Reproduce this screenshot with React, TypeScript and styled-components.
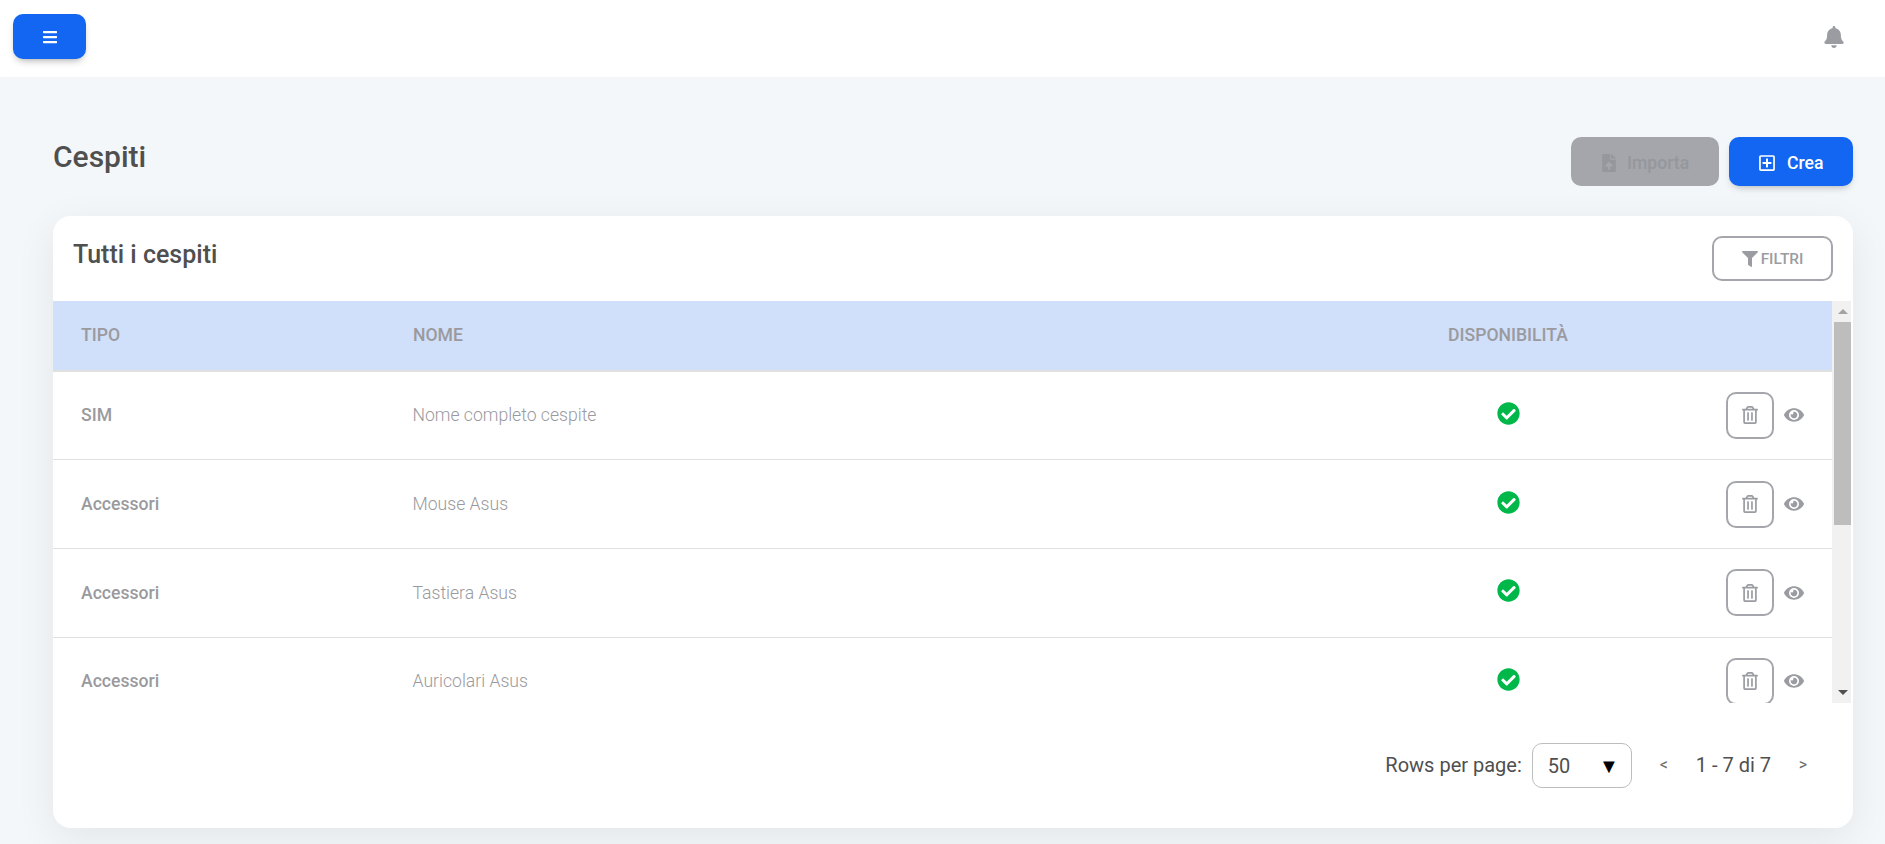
import React from 'react';
import styled, {createGlobalStyle} from "styled-components";
import {FaBars, FaBell, FaCheckCircle, FaEye, FaFileUpload, FaFilter, FaRegPlusSquare, FaRegTrashAlt} from "react-icons/fa";

const assets = [
    {tipo: 'SIM', nome: 'Nome completo cespite'},
    {tipo: 'Accessori', nome: 'Mouse Asus'},
    {tipo: 'Accessori', nome: 'Tastiera Asus'},
    {tipo: 'Accessori', nome: 'Auricolari Asus'},
];

export default function App() {
    return (
        <>
            <GlobalStyle/>
            <TopBar>
                <MenuButton><FaBars size={16}/></MenuButton>
                <BellIcon><FaBell size={22}/></BellIcon>
            </TopBar>
            <Main>
                <PageHead>
                    <PageTitle>Cespiti</PageTitle>
                    <HeadActions>
                        <ImportButton><FaFileUpload size={18}/>Importa</ImportButton>
                        <CreateButton><FaRegPlusSquare size={18}/>Crea</CreateButton>
                    </HeadActions>
                </PageHead>
                <Card>
                    <CardHead>
                        <CardTitle>Tutti i cespiti</CardTitle>
                        <FilterButton><FaFilter size={16}/>FILTRI</FilterButton>
                    </CardHead>
                    <TableArea>
                        <Table>
                            <HeaderRow>
                                <HeaderCell>TIPO</HeaderCell>
                                <HeaderCell>NOME</HeaderCell>
                                <HeaderCell $center>DISPONIBILITÀ</HeaderCell>
                                <HeaderCell/>
                            </HeaderRow>
                            {assets.map((asset, i) => (
                                <Row key={i}>
                                    <TypeCell>{asset.tipo}</TypeCell>
                                    <NameCell>{asset.nome}</NameCell>
                                    <StatusCell><FaCheckCircle size={23}/></StatusCell>
                                    <ActionsCell>
                                        <DeleteButton><FaRegTrashAlt size={18}/></DeleteButton>
                                        <FaEye size={20}/>
                                    </ActionsCell>
                                </Row>
                            ))}
                        </Table>
                        <ScrollTrack>
                            <ScrollArrow $dir="up"/>
                            <ScrollThumb/>
                            <ScrollArrow $dir="down"/>
                        </ScrollTrack>
                    </TableArea>
                    <Pagination>
                        <PagerLabel>Rows per page:</PagerLabel>
                        <PageSize>50<PageSizeArrow>▼</PageSizeArrow></PageSize>
                        <PagerArrow>&lt;</PagerArrow>
                        <PagerRange>1 - 7 di 7</PagerRange>
                        <PagerArrow>&gt;</PagerArrow>
                    </Pagination>
                </Card>
            </Main>
        </>
    );
}

const GlobalStyle = createGlobalStyle`
  html, body {
    margin: 0;
    height: 844px;
    overflow: hidden;
    background: #f4f7fa;
    font-family: Roboto, "Liberation Sans", sans-serif;
  }
  * {
    box-sizing: border-box;
  }
`

const TopBar = styled.header`
  height: 77px;
  background: #fff;
  padding: 14px 32px 0 13px;
  display: flex;
  justify-content: space-between;
  align-items: flex-start;
`
const MenuButton = styled.button`
  width: 73px;
  height: 45px;
  border: none;
  border-radius: 10px;
  background: #1266f1;
  color: #fff;
  display: flex;
  align-items: center;
  justify-content: center;
  box-shadow: 0 4px 9px -4px rgba(0, 0, 0, .45);
`
const BellIcon = styled.span`
  display: flex;
  margin-top: 12px;
  margin-right: 8px;
  color: #9a9ca2;
`
const Main = styled.main`
  padding: 60px 32px 0 53px;
`
const PageHead = styled.div`
  height: 79px;
  display: flex;
  justify-content: space-between;
  align-items: flex-start;
`
const PageTitle = styled.h1`
  margin: 0;
  padding-top: 1px;
  color: #4f4f4f;
  font-size: 30px;
  font-weight: 500;
  line-height: 38px;
`
const HeadActions = styled.div`
  display: flex;
  gap: 10px;
`
const BaseButton = styled.button`
  height: 49px;
  padding: 3px 0 0 29px;
  border: none;
  border-radius: 10px;
  display: flex;
  align-items: center;
  font-family: inherit;
  font-size: 17.6px;
  font-weight: 500;
`
const ImportButton = styled(BaseButton)`
  width: 148px;
  gap: 9px;
  background: #a4a6ab;
  color: #95979c;
`
const CreateButton = styled(BaseButton)`
  width: 124px;
  gap: 11px;
  background: #1266f1;
  color: #fff;
  box-shadow: 0 4px 9px -4px rgba(0, 0, 0, .35);
`
const Card = styled.section`
  height: 612px;
  border-radius: 18px;
  background: #fff;
  box-shadow: 0 10px 40px rgba(0, 0, 0, .07);
  overflow: hidden;
`
const CardHead = styled.div`
  height: 85px;
  padding: 20px 20px 0;
  display: flex;
  justify-content: space-between;
  align-items: flex-start;
`
const CardTitle = styled.h2`
  margin: 0;
  color: #4f4f4f;
  font-size: 25px;
  font-weight: 500;
  line-height: 38px;
`
const FilterButton = styled.button`
  width: 121px;
  height: 45px;
  border: 2px solid #a4a6ab;
  border-radius: 10px;
  background: #fff;
  color: #9a9ca2;
  display: flex;
  align-items: center;
  justify-content: center;
  gap: 3px;
  font-family: inherit;
  font-size: 15.4px;
  font-weight: 500;
`
const TableArea = styled.div`
  height: 402px;
  margin-right: 2px;
  display: flex;
`
const Table = styled.div`
  flex: 1;
  overflow: hidden;
`
const ScrollTrack = styled.div`
  width: 19px;
  background: #f1f1f1;
  display: flex;
  flex-direction: column;
`
const ScrollArrow = styled.div<{ $dir: 'up' | 'down' }>`
  height: 21px;
  display: flex;
  align-items: center;
  justify-content: center;
  padding-left: 2px;

  &::before {
    content: '';
    border-left: 5px solid transparent;
    border-right: 5px solid transparent;
    ${props => props.$dir === 'up' ? 'border-bottom: 5px solid #a3a3a3;' : 'border-top: 5px solid #505050;'}
  }
`
const ScrollThumb = styled.div`
  height: 203px;
  margin-left: 2px;
  margin-bottom: auto;
  background: #bdbdbd;
`
const RowGrid = styled.div`
  display: grid;
  grid-template-columns: 332px 1fr 236px 206px;
  align-items: center;
`
const HeaderRow = styled(RowGrid)`
  height: 70.67px;
  background: #d0dffa;
  border-bottom: 2px solid #e0e0e0;
`
const HeaderCell = styled.div<{ $center?: boolean }>`
  padding-left: ${props => props.$center ? 0 : '28px'};
  text-align: ${props => props.$center ? 'center' : 'left'};
  color: #9a9a9e;
  font-size: 17.6px;
  font-weight: 500;
`
const Row = styled(RowGrid)`
  height: 88.67px;
  border-bottom: 1px solid #e0e0e0;
`
const TypeCell = styled.div`
  padding-left: 28px;
  color: #9a9a9e;
  font-size: 17.6px;
  font-weight: 500;
`
const NameCell = styled.div`
  padding-left: 27.5px;
  color: #9a9a9e;
  font-size: 17.6px;
  font-weight: 300;
`
const StatusCell = styled.div`
  display: flex;
  justify-content: center;
  margin-top: -4px;
  color: #00b74a;
`
const ActionsCell = styled.div`
  display: flex;
  align-items: center;
  justify-content: flex-end;
  gap: 10px;
  padding-right: 28px;
  color: #9a9ca2;
`
const DeleteButton = styled.button`
  width: 48px;
  height: 47px;
  border: 2px solid #a4a6ab;
  border-radius: 10px;
  background: #fff;
  color: #9a9ca2;
  display: flex;
  align-items: center;
  justify-content: center;
`
const Pagination = styled.div`
  height: 125px;
  padding-top: 40px;
  margin-right: 45px;
  display: flex;
  justify-content: flex-end;
  align-items: flex-start;
  color: #4f4f4f;
  font-size: 20px;
`
const PagerLabel = styled.span`
  line-height: 45px;
  margin-right: 10px;
`
const PageSize = styled.div`
  width: 100px;
  height: 45px;
  margin-right: 27px;
  padding: 0 12px 0 15px;
  border: 1px solid #bdbdbd;
  border-radius: 10px;
  display: flex;
  align-items: center;
  justify-content: space-between;
`
const PageSizeArrow = styled.span`
  color: #000;
  font-size: 20px;
`
const PagerArrow = styled.span`
  width: 10px;
  line-height: 43px;
  color: #6b6b6b;
  font-size: 16px;
  text-align: center;
`
const PagerRange = styled.span`
  line-height: 45px;
  margin: 0 27px;
`
